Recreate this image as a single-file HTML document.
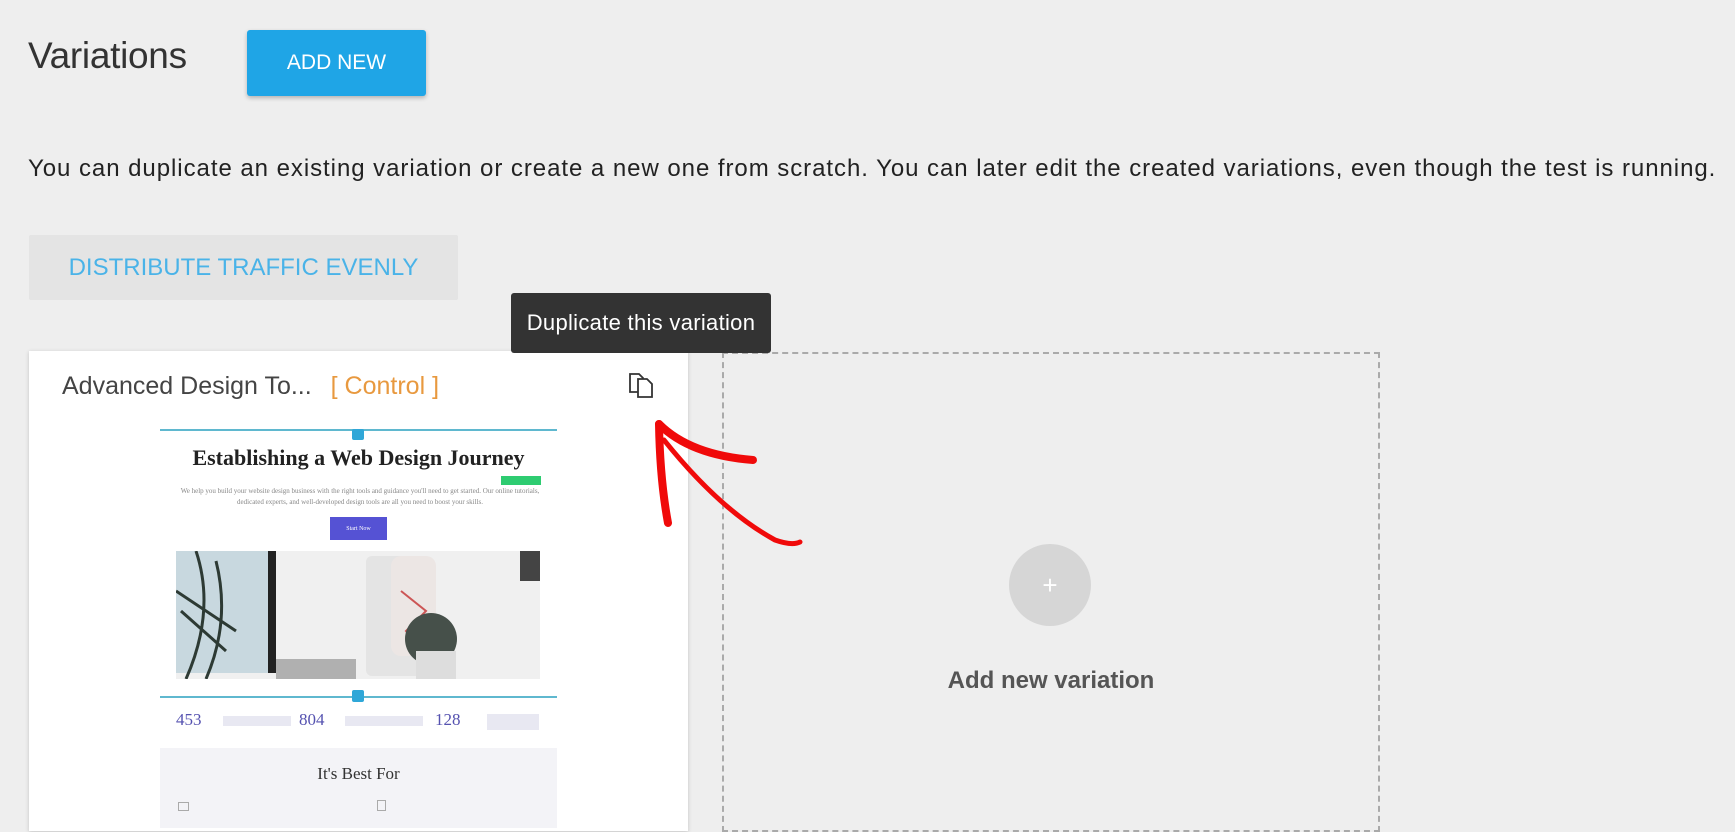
<!DOCTYPE html>
<html><head><meta charset="utf-8"><style>
*{margin:0;padding:0;box-sizing:border-box}
body{width:1735px;height:820px;overflow:hidden;background:#eeeeee;font-family:"Liberation Sans",sans-serif;position:relative;color:#333}
.abs{position:absolute}
.title{left:28px;top:35px;font-size:37px;color:#333;letter-spacing:-0.3px}
.add{left:247px;top:30px;width:179px;height:66px;background:#1fa5e6;border-radius:3px;box-shadow:0 2px 4px rgba(0,0,0,.25);color:#fff;font-size:21px;display:flex;align-items:center;justify-content:center}
.para{left:28px;top:155px;font-size:24px;color:#222;white-space:nowrap;letter-spacing:0.95px}
.dist{left:29px;top:235px;width:429px;height:65px;background:#e4e4e4;border-radius:2px;color:#4ab3e8;font-size:24px;display:flex;align-items:center;justify-content:center}
.tip{left:511px;top:293px;width:260px;height:60px;background:#333;border-radius:3px;color:#fff;font-size:22px;letter-spacing:0.3px;display:flex;align-items:center;justify-content:center;z-index:5}
.card{left:29px;top:351px;width:659px;height:480px;background:#fff;box-shadow:0 1px 4px rgba(0,0,0,.18)}
.ctitle{left:62px;top:372px;font-size:25px;color:#444;white-space:nowrap}
.ctitle span{color:#e8993f;margin-left:12px}
.dash{left:722px;top:352px;width:658px;height:480px;border:2px dashed #aaa}
.circ{left:1009px;top:544px;width:82px;height:82px;border-radius:50%;background:#d6d6d6;color:#fff;font-size:26px;display:flex;align-items:center;justify-content:center}
.anv{left:722px;top:667px;width:658px;text-align:center;font-size:24px;color:#555;font-weight:bold}
.serif{font-family:"Liberation Serif",serif}
</style></head><body>
<div class="abs title">Variations</div>
<div class="abs add">ADD NEW</div>
<div class="abs para">You can duplicate an existing variation or create a new one from scratch. You can later edit the created variations, even though the test is running.</div>
<div class="abs dist">DISTRIBUTE TRAFFIC EVENLY</div>
<div class="abs tip">Duplicate this variation</div>
<div class="abs card"></div>
<div class="abs ctitle">Advanced Design To... <span>[ Control ]</span></div>
<svg class="abs" style="left:626px;top:370px" width="32" height="30" viewBox="0 0 32 30"><path d="M4 4h9l4 4v14H4z" fill="none" stroke="#333" stroke-width="1.8"/><path d="M12 9h9l5 5v13H12z" fill="#fff" stroke="#333" stroke-width="1.8"/></svg>
<div class="abs" style="left:160px;top:429px;width:397px;height:2px;background:#5fb8cf"></div>
<div class="abs" style="left:352px;top:429px;width:12px;height:11px;background:#2fa7d8;border-radius:2px"></div>
<div class="abs serif" style="left:160px;top:445px;width:397px;text-align:center;font-size:22px;font-weight:bold;color:#222">Establishing a Web Design Journey</div>
<div class="abs" style="left:501px;top:476px;width:40px;height:9px;background:#2ecc71"></div>
<div class="abs serif" style="left:175px;top:486px;width:370px;text-align:center;font-size:7px;line-height:11px;color:#888">We help you build your website design business with the right tools and guidance you'll need to get started. Our online tutorials, dedicated experts, and well-developed design tools are all you need to boost your skills.</div>
<div class="abs serif" style="left:330px;top:517px;width:57px;height:23px;background:#5552d4;color:#fff;font-size:6px;display:flex;align-items:center;justify-content:center">Start Now</div>
<svg class="abs" style="left:176px;top:551px" width="364" height="128" viewBox="0 0 364 128">
<rect width="364" height="128" fill="#f0f0f0"/>
<rect x="0" y="0" width="100" height="122" fill="#c8d8df"/>
<path d="M20 0 Q40 60 10 128 M40 10 Q55 70 30 128 M0 40 L60 80 M5 60 L50 100" stroke="#2d3a34" stroke-width="3" fill="none"/>
<rect x="92" y="0" width="8" height="122" fill="#222"/>
<rect x="100" y="108" width="80" height="20" fill="#b0b0b0"/>
<rect x="190" y="5" width="60" height="120" rx="6" fill="#e4e4e4"/>
<rect x="215" y="5" width="45" height="100" rx="10" fill="#ece6e4"/>
<path d="M225 40 L250 60 L230 80 L250 100" stroke="#c55" stroke-width="2" fill="none"/>
<circle cx="255" cy="88" r="26" fill="#46504a"/>
<rect x="240" y="100" width="40" height="28" fill="#ddd"/>
<rect x="344" y="0" width="20" height="30" fill="#444"/>
</svg>
<div class="abs" style="left:160px;top:696px;width:397px;height:2px;background:#5fb8cf"></div>
<div class="abs" style="left:352px;top:690px;width:12px;height:12px;background:#2fa7d8;border-radius:2px"></div>
<div class="abs serif" style="left:176px;top:710px;font-size:17px;color:#5552b0">453</div>
<div class="abs" style="left:223px;top:716px;width:68px;height:10px;background:#e8e8f2"></div>
<div class="abs serif" style="left:299px;top:710px;font-size:17px;color:#5552b0">804</div>
<div class="abs" style="left:345px;top:716px;width:78px;height:10px;background:#e8e8f2"></div>
<div class="abs serif" style="left:435px;top:710px;font-size:17px;color:#5552b0">128</div>
<div class="abs" style="left:487px;top:714px;width:52px;height:16px;background:#e8e8f2"></div>
<div class="abs" style="left:160px;top:748px;width:397px;height:80px;background:#f3f3f7"></div>
<div class="abs serif" style="left:160px;top:764px;width:397px;text-align:center;font-size:17px;color:#333">It's Best For</div>
<div class="abs" style="left:178px;top:802px;width:11px;height:9px;border:1px solid #aaa"></div>
<div class="abs" style="left:377px;top:800px;width:9px;height:11px;border:1px solid #aaa"></div>
<div class="abs dash"></div>
<div class="abs circ">+</div>
<div class="abs anv">Add new variation</div>
<svg class="abs" style="left:0;top:0;z-index:6" width="1735" height="820">
<g fill="none" stroke="#f00a0a" stroke-linecap="round" stroke-linejoin="round">
<path d="M668 523 Q660 480 659 424" stroke-width="8"/>
<path d="M659 424 Q690 455 753 460" stroke-width="8"/>
<path d="M664 440 Q720 510 775 540 Q792 546 800 542" stroke-width="5"/>
</g></svg>
</body></html>
